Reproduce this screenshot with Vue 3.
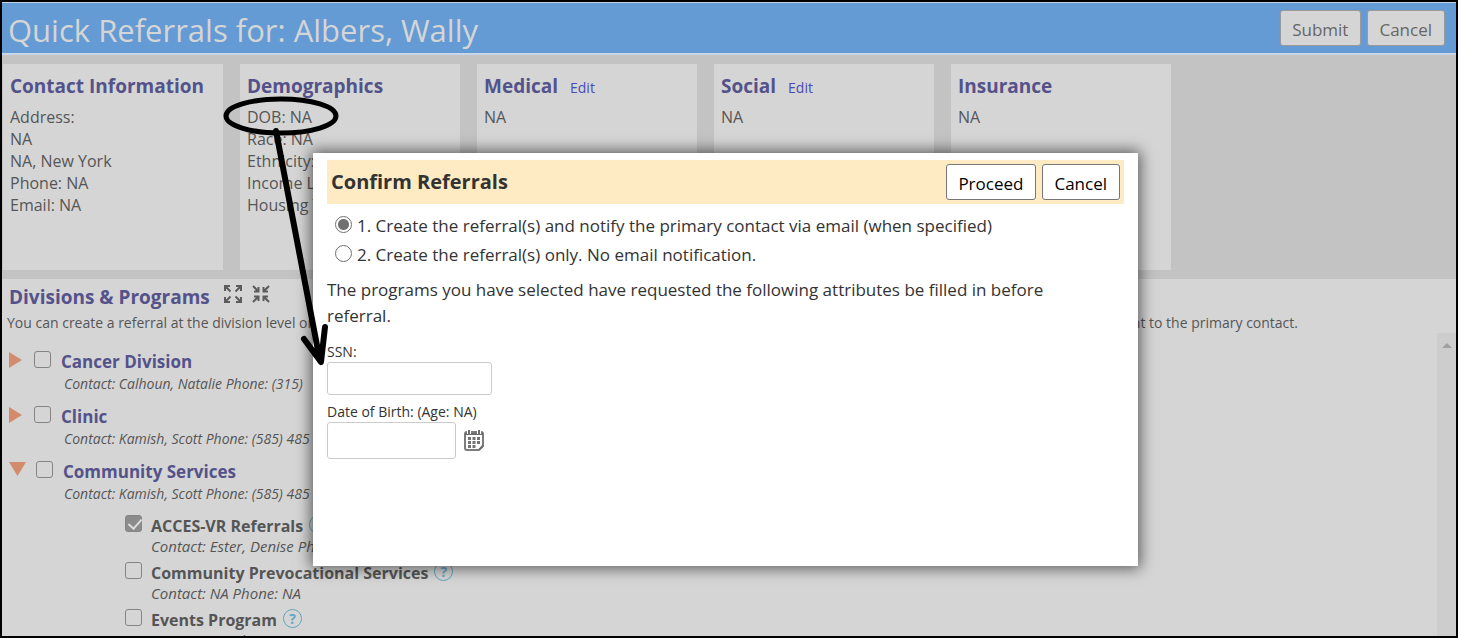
<script setup>
import { ref } from 'vue'

const cards = [
  { title: 'Contact Information', edit: false, lines: ['Address:', 'NA', 'NA, New York', 'Phone: NA', 'Email: NA'] },
  { title: 'Demographics', edit: false, lines: ['DOB: NA', 'Race: NA', 'Ethnicity:', 'Income L', 'Housing T'] },
  { title: 'Medical', edit: true, lines: ['NA'] },
  { title: 'Social', edit: true, lines: ['NA'] },
  { title: 'Insurance', edit: false, lines: ['NA'] }
]

const divisions = ref([
  { name: 'Cancer Division', contact: 'Contact: Calhoun, Natalie Phone: (315)', open: false, checked: false, programs: [] },
  { name: 'Clinic', contact: 'Contact: Kamish, Scott Phone: (585) 485', open: false, checked: false, programs: [] },
  {
    name: 'Community Services',
    contact: 'Contact: Kamish, Scott Phone: (585) 485',
    open: true,
    checked: false,
    programs: [
      { name: 'ACCES-VR Referrals', contact: 'Contact: Ester, Denise Pho', checked: true },
      { name: 'Community Prevocational Services', contact: 'Contact: NA Phone: NA', checked: false },
      { name: 'Events Program', contact: 'Contact: NA Phone: NA', checked: false }
    ]
  }
])

const mode = ref('notify')
const ssn = ref('')
const dob = ref('')
</script>

<template>
  <div class="page">
    <header class="topbar">
      <h1>Quick Referrals for: Albers, Wally</h1>
      <div class="actions">
        <button type="button" class="btn muted">Submit</button>
        <button type="button" class="btn muted">Cancel</button>
      </div>
    </header>

    <section class="cards">
      <article v-for="c in cards" :key="c.title" class="card">
        <h2>{{ c.title }}<a v-if="c.edit" href="#" class="edit">Edit</a></h2>
        <p v-for="l in c.lines" :key="l">{{ l }}</p>
      </article>
    </section>

    <main class="programs">
      <div class="heading">
        <h2>Divisions &amp; Programs</h2>
        <button type="button" class="icon-btn" aria-label="Expand all">
          <svg width="18" height="18" viewBox="0 0 18 18" fill="none" stroke="#5c5c5c" stroke-width="2">
            <path d="M1 6V1h5M1.500 1.500l5 5M12 1h5v5M16.500 1.500l-5 5M1 12v5h5M1.500 16.500l5-5M17 12v5h-5M16.500 16.500l-5-5" />
          </svg>
        </button>
        <button type="button" class="icon-btn" aria-label="Collapse all">
          <svg width="18" height="18" viewBox="0 0 18 18" fill="none" stroke="#5c5c5c" stroke-width="2">
            <path d="M6.500 2v4.500H2M1 1l5.500 5.500M11.500 2v4.500H16M17 1l-5.500 5.500M6.500 16v-4.500H2M1 17l5.500-5.500M11.500 16v-4.500H16M17 17l-5.500-5.500" />
          </svg>
        </button>
      </div>
      <p class="intro"><span>You can create a referral at the division level or</span><span>nt to the primary contact.</span></p>

      <div class="tree-wrap">
        <ul class="tree">
          <li v-for="(d, i) in divisions" :key="d.name" class="division">
            <div class="row">
              <button type="button" class="toggle" :aria-label="'Toggle ' + d.name">
                <svg v-if="d.open" width="17" height="14" viewBox="0 0 17 14"><path d="M0 0h17L8.500 14z" fill="#d38b6c" /></svg>
                <svg v-else width="15" height="16" viewBox="0 0 15 16"><path d="M0 0l13 8-13 8z" fill="#d38b6c" /></svg>
              </button>
              <input :id="'d' + i" v-model="d.checked" type="checkbox" class="check" />
              <label :for="'d' + i" class="dname">{{ d.name }}</label>
            </div>
            <p class="contact">{{ d.contact }}</p>
            <ul v-if="d.open" class="children">
              <li v-for="(p, j) in d.programs" :key="p.name" class="program">
                <div class="prow">
                  <input :id="'p' + j" v-model="p.checked" type="checkbox" class="check" />
                  <label :for="'p' + j" class="pname">{{ p.name }}</label>
                  <button type="button" class="help" :aria-label="'About ' + p.name">?</button>
                </div>
                <p class="pcontact">{{ p.contact }}</p>
              </li>
            </ul>
          </li>
        </ul>
        <div class="scrollbar">
          <svg width="10" height="5" viewBox="0 0 10 5"><path d="M5 0l5 5H0z" fill="#a0a0a0" /></svg>
        </div>
      </div>
    </main>

    <div class="overlay">
      <div class="dialog" role="dialog" aria-labelledby="dlg-title">
        <div class="dlg-head">
          <h2 id="dlg-title">Confirm Referrals</h2>
          <div class="dlg-actions">
            <button type="button" class="btn">Proceed</button>
            <button type="button" class="btn">Cancel</button>
          </div>
        </div>
        <div class="option">
          <input id="o1" v-model="mode" type="radio" name="mode" value="notify" />
          <label for="o1">1. Create the referral(s) and notify the primary contact via email (when specified)</label>
        </div>
        <div class="option">
          <input id="o2" v-model="mode" type="radio" name="mode" value="only" />
          <label for="o2">2. Create the referral(s) only. No email notification.</label>
        </div>
        <p class="note">The programs you have selected have requested the following attributes be filled in before referral.</p>
        <label class="flabel" for="ssn">SSN:</label>
        <input id="ssn" v-model="ssn" type="text" class="field ssn" />
        <label class="flabel second" for="dob">Date of Birth: (Age: NA)</label>
        <div class="dob-row">
          <input id="dob" v-model="dob" type="text" class="field dob" />
          <button type="button" class="icon-btn" aria-label="Choose date">
            <svg width="20" height="21" viewBox="0 0 20 21">
              <path d="M3 2h14a2 2 0 0 1 2 2v12l-4 4H3a2 2 0 0 1-2-2V4a2 2 0 0 1 2-2z" fill="#fff" stroke="#7c7c7c" stroke-width="2" />
              <path d="M1 3h18v2H1zM19 14v3l-3 3h-2z" fill="#6c6c6c" />
              <path d="M5 0v4M15 0v4" stroke="#fff" stroke-width="4" />
              <path d="M5 0v4M15 0v4" stroke="#6c6c6c" stroke-width="2" />
              <path d="M4 7h3v3H4zM8.500 7h3v3h-3zM13 7h3v3h-3zM4 11h3v3H4zM8.500 11h3v3h-3zM13 11h3v3h-3zM4 15h3v3H4zM8.500 15h3v3h-3z" fill="#737373" />
            </svg>
          </button>
        </div>
      </div>
    </div>

    <svg class="marks" width="360" height="380" viewBox="0 0 360 380" fill="none" stroke="#000" stroke-width="5" stroke-linecap="round" stroke-linejoin="round">
      <ellipse cx="281" cy="116" rx="55" ry="17" />
      <path d="M276 131L320 361M304 339L321 362L325 327" stroke-width="6" />
    </svg>
  </div>
</template>

<style>
body { margin: 0; }
</style>

<style scoped>
* { box-sizing: border-box; }
.page {
  position: relative;
  display: flex;
  flex-direction: column;
  height: 100vh;
  overflow: hidden;
  border: 2px solid #000;
  background: #c3c3c3;
  color: #555;
  font-family: "Open Sans", "Noto Sans", sans-serif;
  font-size: 16px;
  line-height: 22px;
}
h1, h2, p, ul { margin: 0; padding: 0; font-weight: 400; }
ul { list-style: none; }
button, input { font: inherit; }
.topbar {
  display: flex;
  align-items: center;
  justify-content: space-between;
  flex: none;
  height: 53px;
  padding: 0 11px 0 6px;
  border-top: 1px solid #c3d3e6;
  border-bottom: 2px solid #c8d6e8;
  background: #649bd4;
}
h1 { padding-top: 4px; color: #d5d5d5; font-size: 31px; line-height: 46px; }
.actions { display: flex; gap: 6px; }
.btn {
  height: 36px;
  padding: 3px 12px 0 11px;
  border: 1px solid #767676;
  border-radius: 3px;
  background: #fff;
  color: #000;
  font-size: 17px;
}
.btn.muted { border-color: #9a9a9a; background: #d5d5d5; color: #666; }
.cards { display: flex; flex: none; gap: 17px; padding: 9px 1px; }
.card {
  flex: 0 1 220px;
  min-height: 206px;
  padding: 8px 7px;
  background: #d5d5d5;
  white-space: nowrap;
}
.card h2, .heading h2 { color: #54528a; font-size: 19px; line-height: 28px; font-weight: 700; }
.card h2 { margin-bottom: 6px; }
.card .edit { margin-left: 12px; color: #4a4ab8; font-size: 14px; line-height: 14px; font-weight: 400; text-decoration: none; }
.programs { display: flex; flex: 1; flex-direction: column; min-height: 0; background: #d5d5d5; }
.heading { display: flex; align-items: flex-start; gap: 10px; padding: 4px 7px 0; }
.heading h2 { margin-right: 4px; }
.heading .icon-btn { padding-top: 2px; }
.icon-btn { display: flex; padding: 0; border: 0; background: none; }
.intro { display: flex; justify-content: space-between; max-width: 1296px; padding: 1px 0 0 5px; font-size: 14px; line-height: 21px; }
.tree-wrap { display: flex; flex: 1; min-height: 0; overflow: hidden; }
.tree { flex: 1; padding-top: 13px; }
.division { height: 55px; }
.division:last-child { height: auto; }
.row { display: flex; gap: 10px; height: 30px; padding-left: 7px; }
.toggle { display: flex; padding: 6px 0 0; border: 0; background: none; }
.check {
  appearance: none;
  flex: none;
  width: 17px;
  height: 17px;
  margin: 5px 0 0;
  border: 1px solid #848484;
  border-radius: 3px;
}
.check:checked {
  background: #8c8c8c;
}
.check:checked::after {
  content: "";
  display: block;
  width: 6px;
  height: 11px;
  margin: 0 0 0 5px;
  border: solid #ddd;
  border-width: 0 2px 2px 0;
  rotate: 42deg;
}
.dname { color: #54528a; font-size: 17px; line-height: 32px; font-weight: 700; }
.contact, .pcontact { font-style: italic; }
.contact { padding-left: 62px; font-size: 14px; line-height: 16px; }
.children { padding: 13px 0 0 123px; }
.program { height: 47px; }
.prow { display: flex; gap: 6px; height: 22px; }
.prow .check { margin: 0 3px 0 0; }
.pname { font-size: 16px; line-height: 22px; font-weight: 700; }
.pcontact { padding-left: 26px; font-size: 15px; line-height: 18px; }
.help {
  width: 19px;
  height: 19px;
  padding: 0;
  border: 1px solid #64a5b9;
  border-radius: 50%;
  background: none;
  color: #64a5c8;
  font-size: 14px;
  line-height: 14px;
  font-weight: 700;
}
.scrollbar { width: 19px; padding: 9px 5px; background: #cdcdcd; line-height: 0; }
.overlay { position: absolute; inset: 0; display: flex; justify-content: center; align-items: flex-start; padding: 151px 7px 0 0; }
.dialog {
  width: 825px;
  max-width: 90%;
  min-height: 413px;
  padding: 7px 14px;
  background: #fff;
  box-shadow: 0 0 14px 2px rgba(0, 0, 0, 0.6);
  color: #333;
  font-size: 17px;
  line-height: 26px;
}
.dlg-head {
  display: flex;
  align-items: center;
  justify-content: space-between;
  height: 44px;
  margin-bottom: 9px;
  padding: 0 4px;
  background: #ffebc3;
}
.dlg-head h2 { font-size: 20px; font-weight: 700; }
.dlg-actions { display: flex; gap: 6px; }
.option { display: flex; gap: 5px; height: 29px; padding-left: 8px; }
.option input {
  appearance: none;
  flex: none;
  width: 17px;
  height: 17px;
  margin: 3px 0 0;
  border: 1px solid #707070;
  border-radius: 50%;
}
.option input:checked { background: radial-gradient(#707070 5px, #fff 6px); }
.note { margin-top: 6px; padding-right: 48px; }
.flabel { display: block; margin-top: 13px; font-size: 14px; line-height: 20px; }
.flabel.second { margin-top: 7px; }
.field { display: block; border: 1px solid #ccc; border-radius: 3px; background: #fff; }
.ssn { width: 165px; height: 33px; }
.dob { width: 129px; height: 37px; }
.dob-row { display: flex; align-items: center; gap: 8px; }
.marks { position: absolute; top: -2px; left: -2px; pointer-events: none; }
</style>
